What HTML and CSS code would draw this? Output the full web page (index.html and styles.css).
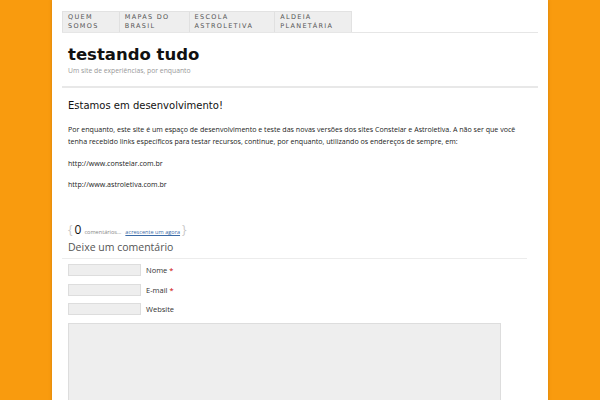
FILE: index.html
```html
<!DOCTYPE html>
<html lang="pt-BR">
<head>
<meta charset="utf-8">
<title>testando tudo</title>
<link rel="stylesheet" href="styles.css">
</head>
<body>
<div class="page">
  <nav class="nav">
    <ul class="menu">
      <li class="w1">Quem<br>somos</li>
      <li class="w2">Mapas do<br>Brasil</li>
      <li class="w3">Escola<br>Astroletiva</li>
      <li class="w4">Aldeia<br>Planetária</li>
    </ul>
  </nav>
  <header class="header">
    <h1 class="site-title">testando tudo</h1>
    <p class="tagline">Um site de experiências, por enquanto</p>
  </header>
  <main class="post">
    <h2 class="post-title">Estamos em desenvolvimento!</h2>
    <p class="text">Por enquanto, este site é um espaço de desenvolvimento e teste das novas versões dos sites Constelar e Astroletiva. A não ser que você tenha recebido links específicos para testar recursos, continue, por enquanto, utilizando os endereços de sempre, em:</p>
    <p class="text">http://www.constelar.com.br</p>
    <p class="text">http://www.astroletiva.com.br</p>
    <div class="comments-count">
      <span class="brace">{</span>
      <span class="num">0</span>
      <span class="small">comentários…</span>
      <a class="small link" href="#">acrescente um agora</a>
      <span class="brace">}</span>
    </div>
    <h3 class="reply-title">Deixe um comentário</h3>
    <form class="form">
      <div class="row"><span class="field"></span><label class="label">Nome <span class="req">*</span></label></div>
      <div class="row"><span class="field"></span><label class="label">E-mail <span class="req">*</span></label></div>
      <div class="row"><span class="field"></span><label class="label">Website</label></div>
      <div class="textarea"></div>
    </form>
  </main>
</div>
</body>
</html>
```

FILE: styles.css
```css
html, body {
  margin: 0;
  padding: 0;
  height: 100%;
}
body {
  background: #f99b0e;
  font-family: "Open Sans", "DejaVu Sans", sans-serif;
  color: #222;
  overflow: hidden;
}
.page {
  width: 496px;
  margin: 0 auto;
  background: #fff;
  min-height: 400px;
  padding: 11px 10px 0;
  box-sizing: border-box;
  box-shadow: 0 0 3px rgba(150, 80, 0, 0.35);
}
.nav {
  border-bottom: 1px solid #e6e6e6;
}
.menu {
  list-style: none;
  margin: 0;
  padding: 0;
  display: flex;
  width: 290px;
  background: #eeeeee;
  border: 1px solid #e2e2e2;
  border-bottom: none;
  box-sizing: border-box;
}
.menu li {
  font-family: "DejaVu Sans", sans-serif;
  font-size: 6.5px;
  line-height: 9px;
  letter-spacing: 1.3px;
  text-transform: uppercase;
  color: #555;
  padding: 1px 5px 1px;
  border-right: 1px solid #e0e0e0;
  box-sizing: border-box;
}
.menu li:last-child { border-right: none; }
.menu .w1 { width: 57px; }
.menu .w2 { width: 70px; }
.menu .w3 { width: 86px; }
.menu .w4 { width: 76px; }
.header {
  padding: 10px 6px 11px;
  border-bottom: 2px solid #e8e8e8;
}
.site-title {
  margin: 0;
  font-family: "DejaVu Sans", sans-serif;
  font-weight: bold;
  font-size: 16.5px;
  line-height: 23px;
  color: #111;
}
.tagline {
  margin: 0;
  font-size: 6.8px;
  color: #999;
  line-height: 9px;
}
.post {
  padding: 10px 6px 0;
}
.post-title {
  margin: 0 0 9px;
  font-family: "DejaVu Sans", sans-serif;
  font-weight: normal;
  font-size: 10px;
  line-height: 16px;
  color: #111;
}
.text {
  margin: 0 0 9.5px;
  width: 455px;
  font-size: 7.08px;
  line-height: 12px;
  color: #222;
}
.comments-count {
  margin-top: 31px;
  display: flex;
  align-items: baseline;
  gap: 2px;
  height: 16px;
  color: #999;
}
.brace {
  font-size: 12px;
  color: #c8c8c8;
}
.num {
  font-size: 12px;
  color: #111;
  margin-right: 1px;
}
.small {
  font-size: 5.6px;
  color: #888;
}
.link {
  color: #3a6aa6;
  text-decoration: underline;
  margin-left: 2px;
}
.reply-title {
  margin: 3px -6px 0;
  padding: 0 6px 3px;
  font-weight: normal;
  font-size: 10.5px;
  line-height: 15px;
  color: #555;
  border-bottom: 1px solid #ececec;
  width: 453px;
}
.form {
  padding-top: 5px;
}
.row {
  display: flex;
  align-items: center;
  gap: 5px;
  height: 12px;
  margin-bottom: 7.5px;
}
.field {
  width: 73px;
  height: 12px;
  background: #eeeeee;
  border: 1px solid #dddddd;
  box-sizing: border-box;
}
.label {
  font-size: 7.5px;
  color: #333;
}
.req { color: #c00; }
.textarea {
  width: 433px;
  height: 120px;
  background: #eeeeee;
  border: 1px solid #dddddd;
  box-sizing: border-box;
}
```
